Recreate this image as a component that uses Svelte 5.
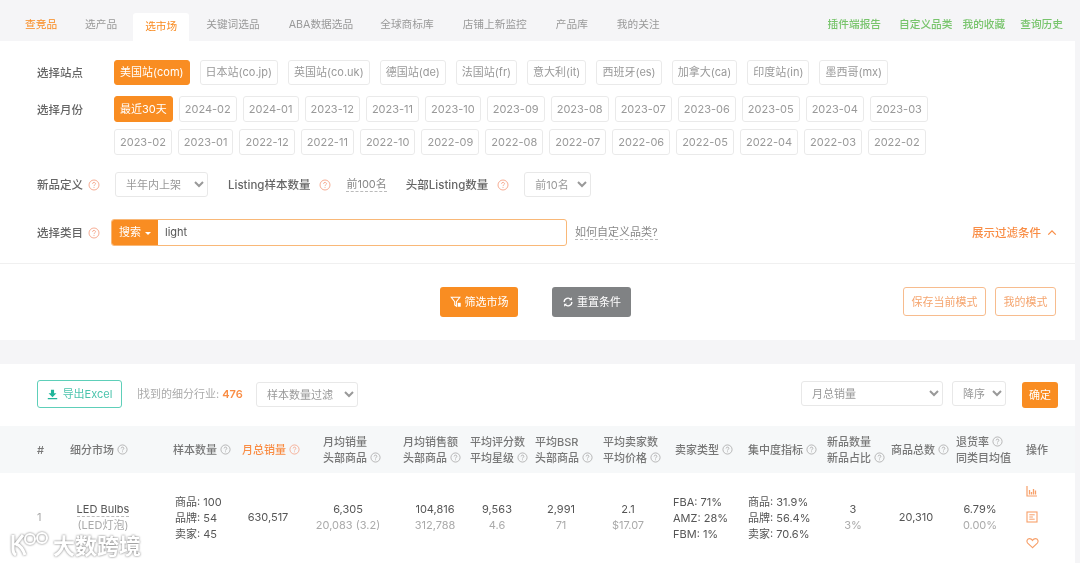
<script>
  const sites = ['美国站(com)','日本站(co.jp)','英国站(co.uk)','德国站(de)','法国站(fr)','意大利(it)','西班牙(es)','加拿大(ca)','印度站(in)','墨西哥(mx)'];
  const months1 = ['最近30天','2024-02','2024-01','2023-12','2023-11','2023-10','2023-09','2023-08','2023-07','2023-06','2023-05','2023-04','2023-03'];
  const months2 = ['2023-02','2023-01','2022-12','2022-11','2022-10','2022-09','2022-08','2022-07','2022-06','2022-05','2022-04','2022-03','2022-02'];
  const tabs = ['查竞品','选产品','选市场','关键词选品','ABA数据选品','全球商标库','店铺上新监控','产品库','我的关注'];
  const links = ['插件端报告','自定义品类','我的收藏','查询历史'];
</script>

{#snippet help(cls = '')}
  <svg class="help {cls}" viewBox="0 0 12 12" width="11" height="11" aria-hidden="true">
    <circle cx="6" cy="6" r="5" fill="none" stroke="currentColor" stroke-width=".9"/>
    <path d="M4.5 4.8C4.6 3.9 5.2 3.4 6 3.4s1.5.5 1.5 1.3c0 1.1-1.5 1.2-1.5 2.4M6 8.1v.9" fill="none" stroke="currentColor" stroke-width=".9"/>
  </svg>
{/snippet}

<div class="page">
  <nav class="nav">
    <div class="tabs">
      {#each tabs as t, i}
        <span class="tab" class:first={i === 0} class:active={i === 2}>{t}</span>
      {/each}
    </div>
    <div class="links">
      {#each links as l}<span>{l}</span>{/each}
    </div>
  </nav>

  <section class="filters">
    <div class="form">
      <div class="line sites">
        <span class="label">选择站点</span>
        <div class="chips gap-site">
          {#each sites as s, i}<span class="chip" class:on={i === 0}>{s}</span>{/each}
        </div>
      </div>
      <div class="line months">
        <span class="label">选择月份</span>
        <div class="month-rows">
          <div class="chips">
            {#each months1 as m, i}<span class="chip m" class:on={i === 0}>{m}</span>{/each}
          </div>
          <div class="chips">
            {#each months2 as m}<span class="chip m">{m}</span>{/each}
          </div>
        </div>
      </div>
      <div class="line defs">
        <span class="label short">新品定义</span>{@render help('warn')}
        <select class="sel s1"><option>半年内上架</option></select>
        <span class="label l2">Listing样本数量</span>{@render help('warn')}
        <span class="dotted top100">前100名</span>
        <span class="label l3">头部Listing数量</span>{@render help('warn')}
        <select class="sel s2"><option>前10名</option></select>
      </div>
      <div class="line cats">
        <span class="label short">选择类目</span>{@render help('warn')}
        <div class="search">
          <span class="search-btn">搜索 <i class="caret"></i></span>
          <span class="search-val">light</span>
        </div>
        <span class="dotted howto">如何自定义品类?</span>
        <span class="toggle">展示过滤条件
          <svg viewBox="0 0 12 8" width="10" height="7" aria-hidden="true"><path d="M1.5 6.5 6 2l4.500 4.500" fill="none" stroke="currentColor" stroke-width="1.500"/></svg>
        </span>
      </div>
    </div>
    <div class="actions">
      <div class="center-actions">
        <button class="btn primary">
          <svg viewBox="0 0 14 14" width="12" height="12" aria-hidden="true"><path d="M1.500 1.500h10L7.500 6.500v5.500L5.500 10.500V6.500z" fill="none" stroke="#fff" stroke-width="1.200"/><rect x="9" y="8" width="3.500" height="4.500" fill="#fff"/></svg>
          筛选市场
        </button>
        <button class="btn grey">
          <svg viewBox="0 0 14 14" width="12" height="12" aria-hidden="true"><path d="M2.500 7a4.500 4.500 0 0 1 8-2.800M11.500 7a4.500 4.500 0 0 1-8 2.800" fill="none" stroke="#fff" stroke-width="1.500"/><path d="M11.500 1.500v3.500H8zM2.500 12.500V9H6z" fill="#fff"/></svg>
          重置条件
        </button>
      </div>
      <div class="right-actions">
        <button class="btn ghost save">保存当前模式</button>
        <button class="btn ghost mine">我的模式</button>
      </div>
    </div>
  </section>

  <section class="results">
    <div class="toolbar">
      <button class="export">
        <svg viewBox="0 0 14 14" width="11" height="11" aria-hidden="true"><path d="M5 1h4v4.500h3L7 10.500 2 5.500h3zM1 11.500h12V13H1z" fill="#20b59a"/></svg>
        导出Excel
      </button>
      <span class="found"><i class="cursor"></i>找到的细分行业: <b>476</b></span>
      <select class="sel s3"><option>样本数量过滤</option></select>
      <span class="spacer"></span>
      <select class="sel s4"><option>月总销量</option></select>
      <select class="sel s5"><option>降序</option></select>
      <button class="confirm">确定</button>
    </div>

    <div class="thead">
      <div>#</div>
      <div>细分市场 {@render help()}</div>
      <div>样本数量 {@render help()}</div>
      <div class="hot">月总销量 {@render help('warn')}</div>
      <div>月均销量<br />头部商品 {@render help()}</div>
      <div>月均销售额<br />头部商品 {@render help()}</div>
      <div>平均评分数<br />平均星级 {@render help()}</div>
      <div>平均BSR<br />头部商品 {@render help()}</div>
      <div>平均卖家数<br />平均价格 {@render help()}</div>
      <div>卖家类型 {@render help()}</div>
      <div>集中度指标 {@render help()}</div>
      <div>新品数量<br />新品占比 {@render help()}</div>
      <div>商品总数 {@render help()}</div>
      <div>退货率 {@render help()}<br />同类目均值</div>
      <div>操作</div>
    </div>

    <div class="tbody">
      <div class="idx">1</div>
      <div class="mid"><span class="market">LED Bulbs</span><br /><span class="sub">(LED灯泡)</span></div>
      <div class="list samples">商品: 100<br />品牌: 54<br />卖家: 45</div>
      <div class="mid">630,517</div>
      <div class="mid">6,305<br /><span class="sub">20,083 (3.2)</span></div>
      <div class="mid">104,816<br /><span class="sub">312,788</span></div>
      <div class="mid">9,563<br /><span class="sub">4.6</span></div>
      <div class="mid">2,991<br /><span class="sub">71</span></div>
      <div class="mid">2.1<br /><span class="sub">$17.07</span></div>
      <div class="list sellers">FBA: 71%<br />AMZ: 28%<br />FBM: 1%</div>
      <div class="list">商品: 31.9%<br />品牌: 56.4%<br />卖家: 70.6%</div>
      <div class="mid">3<br /><span class="sub">3%</span></div>
      <div class="mid">20,310</div>
      <div class="mid">6.79%<br /><span class="sub">0.00%</span></div>
      <div class="ops">
        <svg viewBox="0 0 12 12" width="12" height="12" aria-hidden="true"><path d="M1 1v10h10" fill="none" stroke="#f7a06a" stroke-width="1.200"/><path d="M3.500 5v4.500M5.500 7v2.500M7.500 4v5.500M9.500 5.500v4" stroke="#f7a06a" stroke-width="1.300"/></svg>
        <svg viewBox="0 0 12 12" width="12" height="12" aria-hidden="true"><rect x="1" y="1" width="10" height="10" fill="none" stroke="#f7a06a" stroke-width="1.100"/><path d="M3.300 3.800h5.400M3.300 6h3.600M3.300 8.200h5.400" stroke="#f7a06a" stroke-width="1"/></svg>
        <svg viewBox="0 0 14 12" width="13" height="12" aria-hidden="true"><path d="M7 11 1.800 6.100C.2 4.400 1.200 1.300 3.800 1.300c1.400 0 2.500.8 3.200 1.900.7-1.100 1.800-1.900 3.200-1.900 2.600 0 3.600 3.100 2 4.800z" fill="none" stroke="#f7a06a" stroke-width="1.200"/></svg>
      </div>
    </div>
  </section>

  <div class="watermark">
    <svg viewBox="0 0 38 24" width="38" height="24" aria-hidden="true">
      <path d="M3 3v14c0 3 1 5 3 6M13 3 6 12c3 1 7 5 9 11" fill="none" stroke="#fff" stroke-width="3"/>
      <circle cx="20" cy="7" r="5" fill="none" stroke="#fff" stroke-width="2"/>
      <circle cx="32" cy="6" r="5" fill="none" stroke="#fff" stroke-width="2"/>
    </svg>
    <span>大数跨境</span>
  </div>
</div>

<style>
  :global(body) {
    margin: 0;
    background: #f5f5f7;
  }
  .page {
    position: relative;
    width: 1080px;
    height: 563px;
    overflow: hidden;
    font: 11px/16px Inter, "Noto Sans CJK SC", sans-serif;
    color: #555;
    background: #f5f5f7;
  }
  .nav {
    height: 41px;
    display: flex;
    justify-content: space-between;
    align-items: flex-end;
    filter: blur(.4px);
  }
  .tabs {
    display: flex;
    padding-left: 13px;
  }
  .tab {
    height: 28px;
    line-height: 24px;
    padding: 0 12px;
    margin-right: 5px;
    color: #999;
    font-size: 10.700px;
    border-radius: 3px 3px 0 0;
  }
  .tab.first,
  .tab.active {
    color: #f98a1f;
  }
  .tab.first { margin-right: 4px; }
  .tab:nth-child(2) { margin-right: 4px; }
  .tab:nth-child(5) { margin-right: 3px; }
  .tab.active {
    background: #fff;
    line-height: 28px;
  }
  .links {
    display: flex;
    gap: 14px;
    padding-right: 17px;
    height: 28px;
    line-height: 24px;
    color: #78c46c;
    font-size: 10.700px;
    font-weight: 500;
  }
  .links span:nth-child(1) { margin-right: 4px; }
  .links span:nth-child(2) { margin-right: -4px; }
  .links span:nth-child(3) { margin-right: 1px; }
  .filters {
    width: 1075px;
    height: 299px;
    background: #fff;
    display: flex;
    flex-direction: column;
  }
  .form {
    height: 223px;
    padding: 19px 0 0 37px;
    box-sizing: border-box;
    border-bottom: 1px solid #f0f0f0;
    filter: blur(.4px);
  }
  .line {
    display: flex;
    align-items: center;
  }
  .label {
    color: #666;
    font-size: 11.500px;
    font-weight: 500;
    white-space: nowrap;
  }
  .sites .label,
  .months .label {
    width: 77px;
    flex: none;
  }
  .chips {
    display: flex;
    gap: 6px;
  }
  .gap-site { gap: 10px; }
  .chip {
    height: 25px;
    line-height: 23px;
    padding: 0 5px;
    box-sizing: border-box;
    border: 1px solid #eaeaea;
    border-radius: 3px;
    color: #999;
    white-space: nowrap;
  }
  .chip.m {
    height: 26px;
    line-height: 24px;
    padding: 0 5px;
  }
  .chip.on {
    background: #f98d22;
    border-color: #f98d22;
    color: #fff;
  }
  .months {
    margin-top: 11px;
    align-items: flex-start;
  }
  .months .label { margin-top: 6px; }
  .month-rows {
    display: flex;
    flex-direction: column;
    gap: 7px;
  }
  .defs { margin-top: 17px; height: 25px; }
  .help {
    flex: none;
    vertical-align: -1.500px;
    color: #aaa;
  }
  .help.warn { color: #f5a488; }
  .line .help.warn { width: 12px; height: 12px; }
  .short { margin-right: 5px; }
  .sel {
    font: inherit;
    color: #999;
    background: #fff;
    border: 1px solid #e8e8e8;
    border-radius: 3px;
    height: 25px;
    padding: 0 0 0 6px;
    outline: none;
  }
  .s1 { width: 93px; margin-left: 15px; }
  .l2 { margin-left: 20px; margin-right: 9px; }
  .top100 { margin-left: 15px; }
  .l3 { margin-left: 19px; margin-right: 9px; }
  .s2 { width: 67px; margin-left: 15px; }
  .dotted {
    color: #888;
    border-bottom: 1px dashed #bbb;
    line-height: 13px;
  }
  .cats { margin-top: 22px; height: 27px; }
  .search {
    display: flex;
    width: 456px;
    height: 27px;
    margin-left: 11px;
    box-sizing: border-box;
    border: 1px solid #f9b878;
    border-radius: 3px;
    overflow: hidden;
  }
  .search-btn {
    width: 46px;
    flex: none;
    background: #f98d22;
    color: #fff;
    line-height: 25px;
    text-align: center;
  }
  .caret {
    display: inline-block;
    border: 3px solid transparent;
    border-top-color: #fff;
    border-bottom-width: 0;
    vertical-align: 1px;
    margin-left: 1px;
  }
  .search-val {
    padding-left: 7px;
    line-height: 25px;
    color: #555;
  }
  .howto { margin-left: 8px; }
  .toggle {
    margin-left: auto;
    margin-right: 18px;
    color: #f98d45;
    font-size: 11.500px;
    font-weight: 500;
    display: flex;
    align-items: center;
    gap: 6px;
  }
  .actions {
    position: relative;
    height: 53px;
    padding-top: 23px;
    display: flex;
    filter: blur(.4px);
  }
  .center-actions {
    display: flex;
    gap: 34px;
    margin-left: 440px;
  }
  .right-actions {
    display: flex;
    gap: 9px;
    margin-left: auto;
    margin-right: 19px;
  }
  .btn {
    font: inherit;
    height: 30px;
    box-sizing: border-box;
    border-radius: 3px;
    border: 0;
    display: inline-flex;
    align-items: center;
    justify-content: center;
    gap: 3px;
    padding: 0;
  }
  .primary { width: 78px; background: #f98d22; color: #fff; }
  .grey { width: 79px; background: #808284; color: #fff; }
  .ghost {
    height: 29px;
    background: #fff;
    border: 1px solid #f7bc8e;
    color: #f5a56f;
  }
  .save { width: 83px; }
  .mine { width: 61px; }
  .results {
    width: 1075px;
    margin-top: 24px;
    height: 199px;
    background: #fff;
    filter: blur(.4px);
  }
  .toolbar {
    height: 62px;
    padding: 16px 17px 0 37px;
    box-sizing: border-box;
    display: flex;
    align-items: flex-start;
  }
  .export {
    font: inherit;
    width: 85px;
    height: 28px;
    background: #fff;
    border: 1px solid #5ecfb9;
    border-radius: 3px;
    color: #4cc4ad;
    display: inline-flex;
    align-items: center;
    justify-content: center;
    gap: 5px;
    padding: 0;
  }
  .found {
    margin-left: 16px;
    line-height: 28px;
    color: #aaa;
    width: 118px;
    white-space: nowrap;
  }
  .found b { color: #f98d45; font-weight: 600; }
  .cursor {
    display: inline-block;
    width: 1px;
    height: 11px;
    background: #bbb;
    vertical-align: -1px;
  }
  .s3 { width: 102px; margin-top: 2px; }
  .spacer { flex: 1; }
  .s4 { width: 142px; margin-top: 1px; }
  .s5 { width: 54px; margin: 1px 0 0 9px; }
  .confirm {
    font: inherit;
    width: 36px;
    height: 26px;
    margin: 2px 0 0 16px;
    padding: 0;
    border: 0;
    border-radius: 3px;
    background: #f98d22;
    color: #fff;
  }
  .thead,
  .tbody {
    display: grid;
    padding-left: 37px;
  }
  .thead {
    height: 47px;
    background: #f6f8f9;
    grid-template-columns: 33px 103px 69px 81px 80px 67px 65px 68px 72px 73px 79px 64px 65px 70px 49px;
    align-items: center;
    color: #777;
    font-weight: 500;
    line-height: 16px;
    white-space: nowrap;
  }
  .hot { color: #f98d45; }
  .tbody {
    height: 88px;
    grid-template-columns: 28px 76px 89px 76px 84px 90px 34px 94px 40px 100px 72px 66px 60px 68px 36px;
    align-items: center;
    color: #555;
    line-height: 16px;
    white-space: nowrap;
  }
  .idx { color: #aaa; }
  .mid { text-align: center; }
  .list { padding-top: 2px; }
  .samples { padding-left: 34px; }
  .sellers { padding-left: 25px; }
  .sub { color: #aaa; }
  .market { border-bottom: 1px dashed #bbb; }
  .ops {
    display: flex;
    flex-direction: column;
    align-items: center;
    gap: 14px;
  }
  .watermark {
    position: absolute;
    left: 10px;
    bottom: 7px;
    display: flex;
    align-items: center;
    gap: 5px;
    color: #fff;
    font: 700 22px/24px "Noto Sans CJK SC", sans-serif;
    filter: drop-shadow(0 0 1px rgba(0,0,0,.55));
  }
</style>
